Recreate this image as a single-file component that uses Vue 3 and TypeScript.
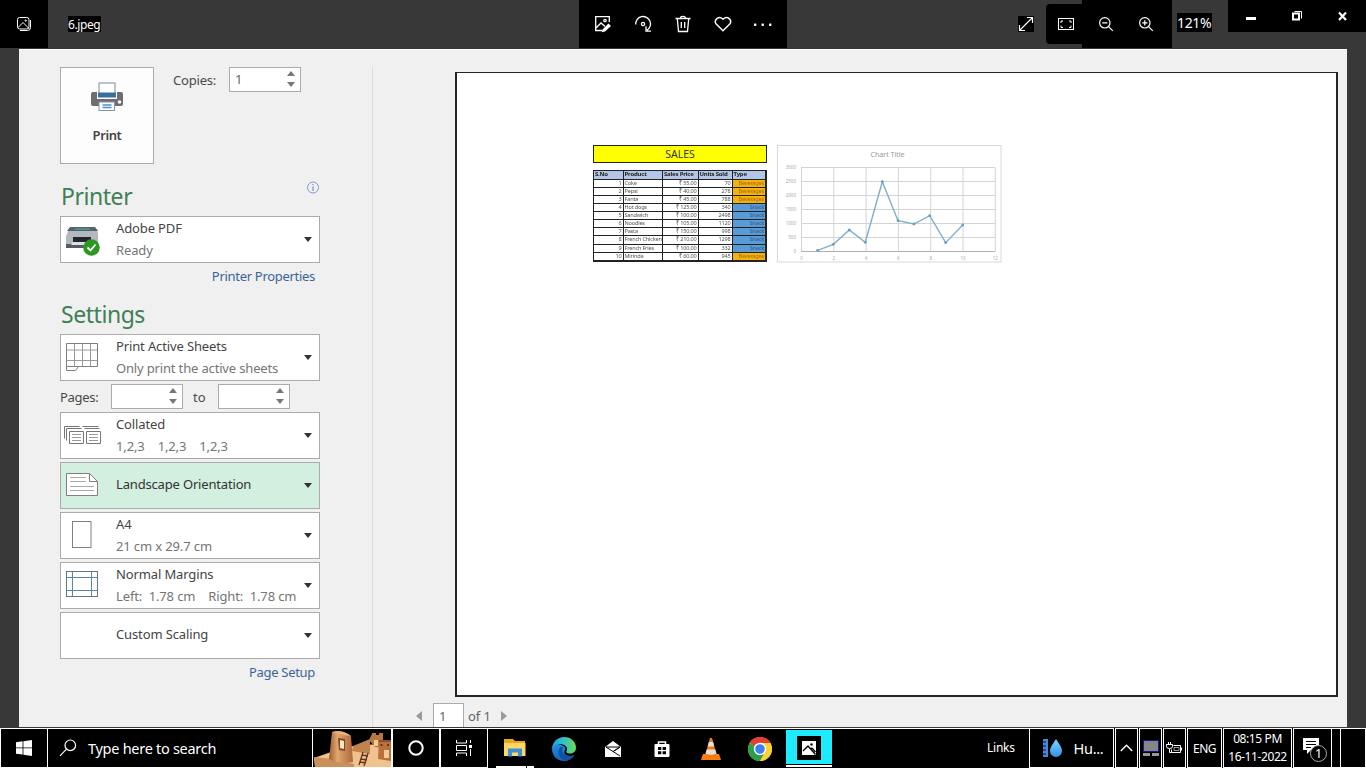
<script setup lang="ts">
interface Row {
  product: string
  price: string
  sold: number
  type: 'Beverages' | 'Snack'
}

interface Setting {
  icon: 'collated' | 'landscape' | 'page' | 'margins' | 'none'
  title: string
  detail?: string
  active?: boolean
}

const rows: Row[] = [
  { product: 'Coke', price: '₹ 55.00', sold: 70, type: 'Beverages' },
  { product: 'Pepsi', price: '₹ 40.00', sold: 278, type: 'Beverages' },
  { product: 'Fanta', price: '₹ 45.00', sold: 788, type: 'Beverages' },
  { product: 'Hot dogs', price: '₹ 125.00', sold: 340, type: 'Snack' },
  { product: 'Sandwich', price: '₹ 100.00', sold: 2498, type: 'Snack' },
  { product: 'Noodles', price: '₹ 105.00', sold: 1120, type: 'Snack' },
  { product: 'Pasta', price: '₹ 150.00', sold: 998, type: 'Snack' },
  { product: 'French Chicken', price: '₹ 210.00', sold: 1298, type: 'Snack' },
  { product: 'French Fries', price: '₹ 100.00', sold: 332, type: 'Snack' },
  { product: 'Mirinda', price: '₹ 60.00', sold: 945, type: 'Beverages' },
]

const settings: Setting[] = [
  { icon: 'collated', title: 'Collated', detail: '1,2,3    1,2,3    1,2,3' },
  { icon: 'landscape', title: 'Landscape Orientation', active: true },
  { icon: 'page', title: 'A4', detail: '21 cm x 29.7 cm' },
  { icon: 'margins', title: 'Normal Margins', detail: 'Left:  1.78 cm    Right:  1.78 cm' },
  { icon: 'none', title: 'Custom Scaling' },
]

const yLabels: string[] = ['3000', '2500', '2000', '1500', '1000', '500', '0']
const xLabels: string[] = ['0', '2', '4', '6', '8', '10', '12']
const points: [number, number][] = [
  [40.7, 105.3], [56.3, 99.3], [72.3, 85], [88.3, 97.3], [105.3, 36.7],
  [121, 75.7], [137, 79], [152.7, 70.7], [168.7, 97.7], [185.7, 80],
]
const line = points.map((p) => p.join(',')).join(' ')
</script>

<template>
  <div class="screen">
    <header class="bar">
      <div class="photos">
        <svg width="16" height="16" viewBox="0 0 16 16" fill="none" stroke="#fff">
          <rect x="1.5" y="1.5" width="11.5" height="11.5" rx="2.2" />
          <path d="M14.5 4v7.500q0 3-3 3H4M2 11.500l5-5 6 6" />
          <circle cx="9.700" cy="4.600" r=".7" />
        </svg>
      </div>
      <span class="filename">6.jpeg</span>
      <div class="tools">
        <svg width="18" height="18" viewBox="0 0 18 18" fill="none" stroke="#fff" stroke-width="1.300">
          <path d="M8 15.500H1.700V1.700h13.600V7M2 13l5-5 4 3.500" />
          <circle cx="11" cy="5.500" r="1.200" />
          <path d="M8.500 14.500l6-6 2.500 2.500-6 5.500-3.300.8z" fill="#fff" stroke="none" />
        </svg>
        <svg width="18" height="18" viewBox="0 0 18 18" fill="none" stroke="#fff" stroke-width="1.300">
          <path d="M1.700 9.500A7.400 7.400 0 1 1 13 15.200M12 11.200v5h5" />
          <circle cx="9" cy="9" r="1.600" />
        </svg>
        <svg width="18" height="18" viewBox="0 0 18 18" fill="none" stroke="#fff" stroke-width="1.300">
          <path d="M1.500 3.500h15M6.500 3.300q0-2 2.500-2t2.500 2M3.300 3.800l1.200 12.700h9l1.200-12.700M7.300 7v6M10.700 7v6" />
        </svg>
        <svg width="18" height="18" viewBox="0 0 18 18" fill="none" stroke="#fff" stroke-width="1.400">
          <path d="M9 15.800L2.200 9C-.6 5.500 4.500-.2 9 4.200c4.500-4.400 9.600 1.300 6.800 4.800z" />
        </svg>
        <svg width="18" height="18" viewBox="0 0 18 18" fill="#fff">
          <rect x="0" y="8.500" width="2.400" height="2.400" rx=".6" /><rect x="7.500" y="8.500" width="2.400" height="2.400" rx=".6" /><rect x="15" y="8.500" width="2.400" height="2.400" rx=".6" />
        </svg>
      </div>
      <div class="expand">
        <svg width="16" height="16" viewBox="0 0 16 16" fill="none" stroke="#fff" stroke-width="1.200">
          <path d="M1.500 14.500l13-13M9 1.500h5.500V7M1.500 9v5.500H7" />
        </svg>
      </div>
      <div class="fit">
        <svg width="16" height="12" viewBox="0 0 16 12" fill="none" stroke="#fff">
          <rect x=".5" y=".5" width="15" height="11" />
          <path d="M3 5V3h2M11 3h2v2M13 7.500v2h-2M5 9.500H3v-2" />
        </svg>
      </div>
      <div class="zooms">
        <svg width="16" height="16" viewBox="0 0 16 16" fill="none" stroke="#fff" stroke-width="1.200">
          <circle cx="6.800" cy="6.800" r="5.200" /><path d="M10.600 10.600l4.200 4.200M4.200 6.800h5.200" />
        </svg>
        <svg width="16" height="16" viewBox="0 0 16 16" fill="none" stroke="#fff" stroke-width="1.200">
          <circle cx="6.800" cy="6.800" r="5.200" /><path d="M10.600 10.600l4.200 4.200M4.200 6.800h5.200M6.800 4.200v5.200" />
        </svg>
      </div>
      <span class="percent">121%</span>
      <div class="window">
        <svg width="138" height="32" viewBox="0 0 138 32" fill="none" stroke="#fff">
          <path d="M18 18.500h10" stroke-width="3" />
          <rect x="65" y="13.500" width="6" height="6" stroke-width="2" />
          <path d="M66.500 11.500h7v7" />
          <path d="M111 12.500l7 7.500M118 12.500l-7 7.500" stroke-width="2.200" />
        </svg>
      </div>
    </header>

    <main class="viewer">
      <section class="panel">
        <div class="top">
          <div class="print">
            <svg width="34" height="30" viewBox="0 0 34 30">
              <rect x="1" y="10" width="32" height="14" rx="2" fill="#6f6d70" />
              <rect x="7" y="7" width="20" height="10" fill="#fff" />
              <rect x="9" y="1" width="16" height="11" fill="#fff" stroke="#7d8b97" />
              <rect x="8" y="10.500" width="18" height="5" fill="#386f9c" />
              <rect x="9" y="20" width="15.500" height="8.500" fill="#fff" stroke="#7d96ab" />
              <path d="M12.500 23h9M12.500 25.500h9" stroke="#4f8fc0" stroke-width="1.300" />
              <circle cx="29.500" cy="20" r="1.800" fill="#fff" />
            </svg>
            <b>Print</b>
          </div>
          <span class="copies">Copies:</span>
          <div class="num">1<i class="spin"></i></div>
        </div>

        <div class="heading">
          <h2>Printer</h2>
          <svg width="14" height="14" viewBox="0 0 14 14" fill="none" stroke="#8297cc">
            <circle cx="7" cy="7.500" r="5.500" /><path d="M7 4v1.300M7 6.500v4.500" stroke-width="1.300" />
          </svg>
        </div>
        <div class="drop">
          <svg class="ico" width="36" height="34" viewBox="0 0 36 34">
            <path d="M3 12l2-5h28l1 5v11H2v-9z" fill="#b4b8bf" />
            <path d="M3 9l3-4h25l3 4z" fill="#59626a" /><path d="M12 6h13l2 2H10z" fill="#489087" />
            <path d="M9 15h18v6H9z" fill="#24282d" /><path d="M2 22h8l-2 4H2zM8 23h17v3H7z" fill="#555c63" />
            <path d="M9 20h17l2 3H7z" fill="#d8e0e8" />
            <circle cx="27.500" cy="25.500" r="8.300" fill="#2d9820" /><path d="M23.500 25.500l3 3 5-6" stroke="#fff" stroke-width="1.800" fill="none" />
          </svg>
          <div class="text"><span>Adobe PDF</span><small>Ready</small></div>
          <i class="caret"></i>
        </div>
        <a class="link">Printer Properties</a>

        <div class="heading second"><h2>Settings</h2></div>
        <div class="drop">
          <svg class="ico" width="36" height="34" viewBox="0 0 36 34" fill="none" stroke="#7e7e7e">
            <path d="M2.500 3.500h31v23h-19l-3 4h-9z" fill="#fff" />
            <path d="M2.500 26.500h12" /><path d="M10.500 3.500v23M18.500 3.500v23M26.500 3.500v23M2.500 10h31M2.500 20.500h31" stroke="#9a9a9a" />
          </svg>
          <div class="text"><span>Print Active Sheets</span><small class="only">Only print the active sheets</small></div>
          <i class="caret"></i>
        </div>
        <div class="pages">
          <span>Pages:</span>
          <div class="num"><i class="spin"></i></div>
          <span class="to">to</span>
          <div class="num"><i class="spin"></i></div>
        </div>
        <div class="list">
          <div v-for="s in settings" :key="s.title" class="drop" :class="{ active: s.active }">
            <svg v-if="s.icon === 'collated'" class="ico wide" width="40" height="34" viewBox="0 0 40 34" fill="none" stroke="#777">
              <path d="M2.500 20.500V8.500h15M4.500 22.500V10.500h15M20.500 8.500h16M22.500 10.500h15" />
              <path d="M7.500 13.500h14v12h-14zM24.500 13.500h14v12h-14z" fill="#fff" />
              <path d="M10 16.500h9M10 19.500h9M10 22.500h9M27 16.500h9M27 19.500h9M27 22.500h9" stroke="#999" />
            </svg>
            <svg v-else-if="s.icon === 'landscape'" class="ico" width="36" height="34" viewBox="0 0 36 34" fill="none" stroke="#808080">
              <path d="M2.500 5.500h23l8 8v14h-31z" fill="#fff" /><path d="M25.500 5.500v8h8" />
              <path d="M6 9.500h16M6 13.500h16M6 18.500h24M6 22.500h24" stroke="#aaa" />
            </svg>
            <svg v-else-if="s.icon === 'page'" class="ico" width="36" height="34" viewBox="0 0 36 34" fill="#fff" stroke="#808080">
              <rect x="8.500" y="3.500" width="18.500" height="26" />
            </svg>
            <svg v-else-if="s.icon === 'margins'" class="ico" width="36" height="34" viewBox="0 0 36 34" fill="none" stroke="#68757f">
              <rect x="2.500" y="3.500" width="31" height="25" /><path d="M8.500 3.500v25M27.500 3.500v25M2.500 9.500h31M2.500 22.500h31" stroke="#5c86a0" />
            </svg>
            <span v-else class="ico"></span>
            <div class="text" :class="{ single: !s.detail }"><span>{{ s.title }}</span><small v-if="s.detail">{{ s.detail }}</small></div>
            <i class="caret"></i>
          </div>
        </div>
        <a class="link setup">Page Setup</a>
      </section>

      <section class="preview">
        <div class="sheet">
          <div class="sales">
            <div class="banner">SALES</div>
            <div class="grid">
              <template v-for="h in ['S.No', 'Product', 'Sales Price', 'Units Sold', 'Type']" :key="h"><b>{{ h }}</b></template>
              <template v-for="(r, i) in rows" :key="r.product">
                <span class="r">{{ i + 1 }}</span><span>{{ r.product }}</span><span class="r">{{ r.price }}</span><span class="r">{{ r.sold }}</span><span class="r" :class="r.type.toLowerCase()">{{ r.type }}</span>
              </template>
            </div>
          </div>
          <svg class="chart" width="225" height="118" viewBox="0 0 225 118">
            <rect x=".5" y=".5" width="223.500" height="116.500" fill="#fff" stroke="#d8d8d8" />
            <text x="110.500" y="12" text-anchor="middle" font-size="7.200" textLength="34" fill="#999">Chart Title</text>
            <g stroke="#d4d4d4">
              <path v-for="(l, i) in yLabels" :key="l" :d="`M24 ${22.5 + i * 14}h194`" />
              <path v-for="(l, i) in xLabels" :key="l" :d="`M${24.5 + i * 32.3} 22.5v84`" />
            </g>
            <path d="M24 106.500h194" stroke="#b0b0b0" />
            <g font-size="4.500" fill="#aaa">
              <text v-for="(l, i) in yLabels" :key="l" x="19" :y="24 + i * 14" text-anchor="end">{{ l }}</text>
              <text v-for="(l, i) in xLabels" :key="l" :x="24.5 + i * 32.3" y="114.500" text-anchor="middle">{{ l }}</text>
            </g>
            <polyline :points="line" fill="none" stroke="#7fb0cd" stroke-width="1.400" />
            <circle v-for="p in points" :key="p[0]" :cx="p[0]" :cy="p[1]" r="1.400" fill="#6d9dbb" />
          </svg>
        </div>
        <div class="pager">
          <i class="prev"></i><span class="pageno">1</span><span class="of">of 1</span><i class="next"></i>
        </div>
      </section>
    </main>

    <footer class="taskbar">
      <div class="tile start">
        <svg width="16" height="16" viewBox="0 0 16 16" fill="#fff"><path d="M0 2.200l6.600-.9v6.200H0zM7.400 1.200L16 0v7.500H7.400zM0 8.300h6.600v6.300L0 13.700zM7.400 8.300H16V16l-8.600-1.300z" /></svg>
      </div>
      <div class="search">
        <svg width="18" height="18" viewBox="0 0 18 18" fill="none" stroke="#fff" stroke-width="1.200"><circle cx="11.300" cy="6.300" r="5.300" /><path d="M7.500 10.200L1 16.800" /></svg>
        <span>Type here to search</span>
      </div>
      <div class="tile fort">
        <svg width="78" height="38" viewBox="0 0 78 38">
          <defs>
            <linearGradient id="sand"><stop stop-color="#9d5d35" /><stop offset=".35" stop-color="#e2a56e" /><stop offset="1" stop-color="#ad673b" /></linearGradient>
          </defs>
          <path d="M1 29l17-6 22-6 38-3v24H2z" fill="#efc28e" />
          <path d="M1 28l20 2 20 5v3H2z" fill="#c9905c" /><path d="M40 17l17-7v15l-18-3z" fill="#c08350" />
          <path d="M19 3q10-2 19 4l2 26q-12 3-24-3z" fill="url(#sand)" />
          <path d="M19 3q10-3 19 4-10-1-19-4" fill="#e8b27b" />
          <path d="M56 11l3-6V4h4v2h3V4h4v15l-8-1z" fill="#b97740" /><path d="M66 11h12v21l-13-2z" fill="#b8713d" />
          <path d="M66 11h12v2H66z" fill="#8f5028" /><path d="M67.500 15h2v2h-2zM74 15h2v2h-2z" fill="#6a351c" />
          <path d="M25 9l7 1v12l-6-1z" fill="#7b492c" /><path d="M27 11l4 1v8l-4-1z" fill="#ffe8bd" />
          <path d="M61 11h4v6h-4zM71 21h5v8h-5z" fill="#efcb96" />
          <path d="M46 36l4-13M51 37l4-13M49 26l6 1M48 30l6 1M47 33l6 1" stroke="#65331d" stroke-width="1.300" />
        </svg>
      </div>
      <div class="tile cortana"><svg width="16" height="16" viewBox="0 0 16 16"><circle cx="8" cy="8" r="6.700" fill="none" stroke="#fff" stroke-width="2" /></svg></div>
      <div class="tile view">
        <svg width="18" height="16" viewBox="0 0 18 16" fill="none" stroke="#fff"><path d="M1.500 0v3h10V0M1.500 16v-3h10v3M1.500 5.500h10v5h-10zM15.500 0v3M15.500 9v7" /><path d="M14 5h3v3h-3z" fill="#fff" stroke="none" /></svg>
      </div>
      <div class="apps">
        <div class="app explorer">
          <svg width="22" height="20" viewBox="0 0 22 20"><path d="M0 1h9l2 2h10v15H0z" fill="#e8a817" /><path d="M0 5h21.500v13H0z" fill="#ffd767" /><path d="M4 18.500v-8h14v8h-4v-4H8v4z" fill="#3e91d6" /></svg>
        </div>
        <div class="app">
          <svg width="24" height="24" viewBox="0 0 24 24">
            <defs>
              <linearGradient id="edge"><stop stop-color="#1fa2dc" /><stop offset=".5" stop-color="#35c1c9" /><stop offset="1" stop-color="#66df4e" /></linearGradient>
              <linearGradient id="wave" x2="0" y2="1"><stop stop-color="#1d8fdc" /><stop offset="1" stop-color="#1466bd" /></linearGradient>
            </defs>
            <path d="M0 12c0-5 5-6 9-4 4 1 5 3 4 5-2 3 1 6 5 6 2 0 3 0 4.500-1C20 22 16 24 12 24 5 24 0 19 0 12" fill="url(#wave)" />
            <path d="M8.500 10c-4 4-2 12 5 13.500 4 0 7-2 9-5.500-5 2-10 1-12-3-1-2 0-4 1-5z" fill="#0f529f" />
            <path d="M0 11.500C.5 5 5.500 0 12 0c7 0 12 5 12 10.500 0 4-3 6-6 6-3 0-4.500-1.500-3.500-2.500 2-3-1-7-6.500-7C4 7 1 9 0 11.500" fill="url(#edge)" />
          </svg>
        </div>
        <div class="app"><svg width="18" height="18" viewBox="0 0 18 18"><path d="M1 7l8-6 8 6v10H1z" fill="#fff" /><path d="M2 7h14L9 11.500zM9 11.500l7 4.500M16 7l-6 4" stroke="#000" fill="none" /></svg></div>
        <div class="app"><svg width="18" height="18" viewBox="0 0 18 18"><path d="M5.500 5V2h7v3" stroke="#fff" stroke-width="1.500" fill="none" /><rect x="1.500" y="4" width="15" height="13" rx="1" fill="#fff" /><path d="M5 7h3.300v3H5zM9.600 7H13v3H9.600zM5 11.300h3.300v3H5zM9.600 11.300H13v3H9.600z" fill="#000" /></svg></div>
        <div class="app">
          <svg width="20" height="23" viewBox="0 0 20 23"><path d="M2 17h16l2 6H0z" fill="#ff7d0a" /><path d="M9 1h2l5 18q-6 3-12 0z" fill="#f57c0b" /><path d="M7.900 5h4.200l1.100 4.500H6.600zM5.600 12.500h8.800l1.100 4.300q-5.500 2-11 0z" fill="#e0e0df" /></svg>
        </div>
        <div class="app">
          <svg width="24" height="24" viewBox="0 0 24 24"><circle cx="12" cy="12" r="12" fill="#eac22e" /><path d="M12 12L1.600 6a12 12 0 0 1 20.800 0z" fill="#e63f32" /><path d="M12 12L1.600 6A12 12 0 0 0 12 24l5.200-9z" fill="#2b9d4b" /><path d="M12 6h10.400A12 12 0 0 1 12 24l5-9z" fill="#fbd22e" /><circle cx="12" cy="12" r="6.200" fill="#fff" /><circle cx="12" cy="12" r="4.800" fill="#3d7ff0" /></svg>
        </div>
        <div class="app current">
          <svg width="24" height="24" viewBox="0 0 24 24"><path d="M0 0h24v24H0z" /><path d="M5 5h14v14H5z" fill="#fff" /><path d="M6 15l5-5 7.500 8.500M13.500 13l1.500-1 3.500 4" fill="none" stroke="#000" stroke-width="1.300" /><circle cx="14.500" cy="8.500" r="1.200" /></svg>
        </div>
        <span class="links">Links</span>
      </div>
      <div class="tile weather">
        <svg width="21" height="20" viewBox="0 0 21 20">
          <defs><linearGradient id="drop" x2="0" y2="1"><stop stop-color="#79d8ff" /><stop offset="1" stop-color="#3591e8" /></linearGradient></defs>
          <path d="M1 1h5v18H1z" fill="#3a8dd9" /><path d="M1 4h3M1 8h3M1 12h3M1 16h3" stroke="#302978" stroke-width="1.500" />
          <path d="M14 1c3 5 6 8 6 12a6 6 0 0 1-12 0c0-4 3-7 6-12" fill="url(#drop)" />
        </svg>
        <span>Hu...</span>
      </div>
      <div class="tile small"><svg width="13" height="8" viewBox="0 0 13 8"><path d="M.8 7l5.700-5.700L12.200 7" fill="none" stroke="#fff" stroke-width="1.400" /></svg></div>
      <div class="tile small"><svg width="18" height="16" viewBox="0 0 18 16"><path d="M1.500.500h15v11h-15z" fill="#858585" stroke="#14149a" /><path d="M1 13h7v3H1zM10 13h7v3h-7z" fill="#999" /></svg></div>
      <div class="tile small"><svg width="17" height="14" viewBox="0 0 17 14" fill="none" stroke="#fff"><path d="M7.500 4.500h7v7h-9v-3M15.500 6.500v3" /><path d="M8 6.500h5v3H8z" stroke="#999" /><path d="M.5 3.500h6v2q0 2-3 2t-3-2zM2.500 1v2M4.500 1v2M3.500 8v3.500h2" /></svg></div>
      <div class="tile lang">ENG</div>
      <div class="tile clock"><span>08:15 PM</span><span>16-11-2022</span></div>
      <div class="tile notif">
        <svg width="26" height="26" viewBox="0 0 26 26"><path d="M1 1h16v12H9l-4 4v-4H1z" fill="#fff" /><path d="M4 4.500h10M4 7.500h10M4 10.500h5" stroke="#000" stroke-width="1.200" /><circle cx="16.500" cy="16.500" r="8" fill="#000" stroke="#aaa" /><text x="16.500" y="21" text-anchor="middle" font-size="12.500" fill="#fff">1</text></svg>
      </div>
      <div class="tile gap"></div>
      <div class="tile desk"></div>
    </footer>
  </div>
</template>

<style>
body { margin: 0; overflow: hidden; background: #383838; }
</style>

<style scoped>
* { box-sizing: border-box; }
.screen { width: 1366px; height: 768px; display: flex; flex-direction: column; background: #383838; font-family: "Noto Sans", "Open Sans", sans-serif; overflow: hidden; }
svg { display: block; flex: none; }

.bar { display: flex; height: 49px; color: #fff; }
.photos { width: 48px; height: 48px; background: #000; display: grid; place-items: center; }
.filename { margin: 16px 0 0 20px; width: 33px; height: 16px; line-height: 17px; background: #000; font-size: 12px; letter-spacing: -.4px; white-space: nowrap; }
.tools { margin-left: 478px; width: 208px; height: 48px; padding: 0 15px; background: #000; display: flex; align-items: center; justify-content: space-between; }
.expand { margin: 16px 0 0 231px; width: 16px; height: 16px; background: #000; }
.fit { margin: 4px 0 0 12px; width: 36px; height: 40px; border-radius: 4px 0 0 4px; background: #000; padding: 14px 0 0 12px; }
.zooms { width: 90px; height: 48px; background: #000; display: flex; align-items: center; gap: 24px; padding-left: 16px; }
.percent { margin: 13px 0 0 5px; width: 35px; height: 19px; line-height: 20px; background: #000; font-size: 14px; letter-spacing: -.35px; white-space: nowrap; }
.window { margin-left: auto; width: 138px; height: 32px; background: #000; }

.viewer { margin-left: 19px; width: 1328px; height: 678px; background: #f0f0f0; border-top: 1px solid #fff; display: flex; overflow: hidden; }
.panel { width: 354px; height: 100%; padding: 17px 0 0 41px; background: linear-gradient(#dcdcdc, #dcdcdc) 353px 17px / 1px 100% no-repeat; color: #4a4a4a; font-size: 13px; }
.top { display: flex; height: 97px; }
.print { width: 94px; height: 97px; background: #fdfdfd; border: 1px solid #ababab; display: flex; flex-direction: column; align-items: center; padding-top: 14px; }
.print b { margin-top: 14px; line-height: 18px; font-size: 13px; font-weight: 600; color: #444; letter-spacing: -.4px; }
.copies { margin: 4px 0 0 19px; width: 56px; line-height: 18px; letter-spacing: -.2px; }
.num { width: 72px; height: 25px; border: 1px solid #ababab; background: #fff; padding-left: 5px; line-height: 23px; color: #666; display: flex; align-items: center; }
.spin { width: 8px; height: 17px; margin: 0 5px 2px auto; display: flex; flex-direction: column; justify-content: space-between; }
.spin::before, .spin::after { content: ""; border: 4px solid transparent; }
.spin::before { border-bottom: 5px solid #777; border-top: 0; margin-top: 1px; }
.spin::after { border-top: 5px solid #777; border-bottom: 0; }
.heading { width: 260px; height: 52px; display: flex; justify-content: space-between; padding-top: 16px; }
.heading h2 { margin: 0; font-size: 23px; line-height: 33px; font-weight: 400; color: #3f8058; letter-spacing: -.45px; padding-left: 1px; }
.second { height: 49px; padding-top: 13px; }
.drop { width: 260px; height: 47px; background: #fff; border: 1px solid #ababab; display: flex; align-items: center; }
.ico { width: 36px; margin-left: 3px; margin-top: -2px; }
.wide { width: 40px; margin-left: 1px; margin-right: -2px; }
.text { margin-left: 16px; width: 188px; display: flex; flex-direction: column; line-height: 22.500px; white-space: pre; letter-spacing: -.13px; }
.text span { color: #444; line-height: 22px; }
.text small { font-size: 13px; color: #757575; line-height: 23px; }
.text .only { letter-spacing: -.16px; }
.single { padding-bottom: 3px; }
.active { background: #d2efdf; }
.active .text span { color: #333; letter-spacing: -.17px; }
.caret { border: 4.500px solid transparent; border-top: 5px solid #333; border-bottom: 0; margin-top: -1px; }
.link { display: block; width: 255px; margin-top: 4px; line-height: 18px; text-align: right; color: #3a6499; letter-spacing: -.3px; }
.pages { display: flex; height: 31px; padding-top: 3px; line-height: 26px; }
.pages > span:first-child { width: 51px; letter-spacing: -.3px; }
.to { margin: 0 12px 0 10px; width: 13px; }
.list { display: flex; flex-direction: column; gap: 3px; }
.setup { margin-top: 4px; }

.preview { flex: 1; padding: 22px 0 0 82px; }
.sheet { width: 883px; height: 625px; background: #fff; border: 2px solid #242625; border-top-width: 1.500px; display: flex; align-items: flex-start; padding: 72px 0 0 136px; }
.sales { width: 174px; margin-right: 10px; }
.banner { height: 18px; background: #ff0; border: 1.500px solid #222; text-align: center; font: 10.500px/17px "Noto Sans", sans-serif; color: #333; }
.grid { margin-top: 7px; display: grid; grid-template-columns: 29.500px 39.500px 35.500px 34px 33.500px; grid-template-rows: 8.500px repeat(10, 8.150px); border: 1px solid #222; font: 5.600px/7.500px "Noto Sans", sans-serif; color: #555; filter: blur(.25px); }
.grid > * { border: solid #222; border-width: 0 1px 1px 0; white-space: nowrap; padding: 0 1px; letter-spacing: -.2px; min-width: 0; }
.grid b { background: #b4c6e7; font-size: 6px; color: #222; }
.r { text-align: right; }
.beverages { background: #f5b20c; color: #a06b18; }
.snack { background: #5b9bd5; color: #2b5985; }
.pager { display: flex; margin-left: -39px; padding-top: 6px; height: 32px; font-size: 13px; color: #666; }
.prev, .next { border: 5px solid transparent; margin-top: 8px; height: 10px; }
.prev { border-right: 6px solid #999; border-left: 0; margin-right: 11px; }
.next { border-left: 6px solid #999; border-right: 0; margin-left: 9px; }
.pageno { width: 31px; height: 28px; border: 1px solid #ababab; background: #fff; padding-left: 5px; line-height: 25px; }
.of { margin-left: 4px; width: 24px; line-height: 27px; white-space: nowrap; letter-spacing: -.1px; }

.taskbar { margin-top: 1px; height: 40px; display: flex; background: #000; color: #fff; font-size: 12px; }
.tile { border: 1px solid #fff; height: 40px; display: flex; align-items: center; justify-content: center; flex: none; }
.start { width: 48px; }
.search { width: 264px; border: solid #fff; border-width: 1px 0; display: flex; align-items: center; padding-left: 11px; font-size: 14.500px; letter-spacing: -.28px; }
.search span { margin-left: 11px; }
.fort { width: 80px; }
.cortana { width: 48px; }
.view { width: 48px; }
.apps { width: 541px; border-top: 1px solid #fff; display: flex; }
.app { width: 49px; display: flex; align-items: center; justify-content: center; flex: none; }
.explorer { margin-left: 2px; background: linear-gradient(#fff, #fff) 6px 100% / 30px 2px no-repeat, linear-gradient(#fff, #fff) 37px 100% / 7px 2px no-repeat; height: 39px; padding-bottom: 1px; }
.current { width: 46px; margin-left: 2px; height: 37px; margin-top: 1px; background: #1febff; border-bottom: 2px solid #fff; box-shadow: inset 0 -1px #000; }
.links { margin-left: 155px; line-height: 38px; letter-spacing: -.25px; }
.weather { width: 85px; font-size: 14.500px; letter-spacing: -.3px; }
.weather svg { margin-left: 2px; }
.weather span { margin-left: 11px; }
.small { width: 23px; margin-left: 1px; }
.lang { width: 35px; margin-left: 1px; letter-spacing: -.55px; }
.clock { width: 69px; margin-left: 1px; flex-direction: column; line-height: 18px; letter-spacing: -.4px; }
.notif { width: 39px; margin-left: 1px; padding: 3px 0 0 5px; }
.gap { width: 9px; border-left: 0; }
.desk { width: 25px; border-left: 0; }
</style>
